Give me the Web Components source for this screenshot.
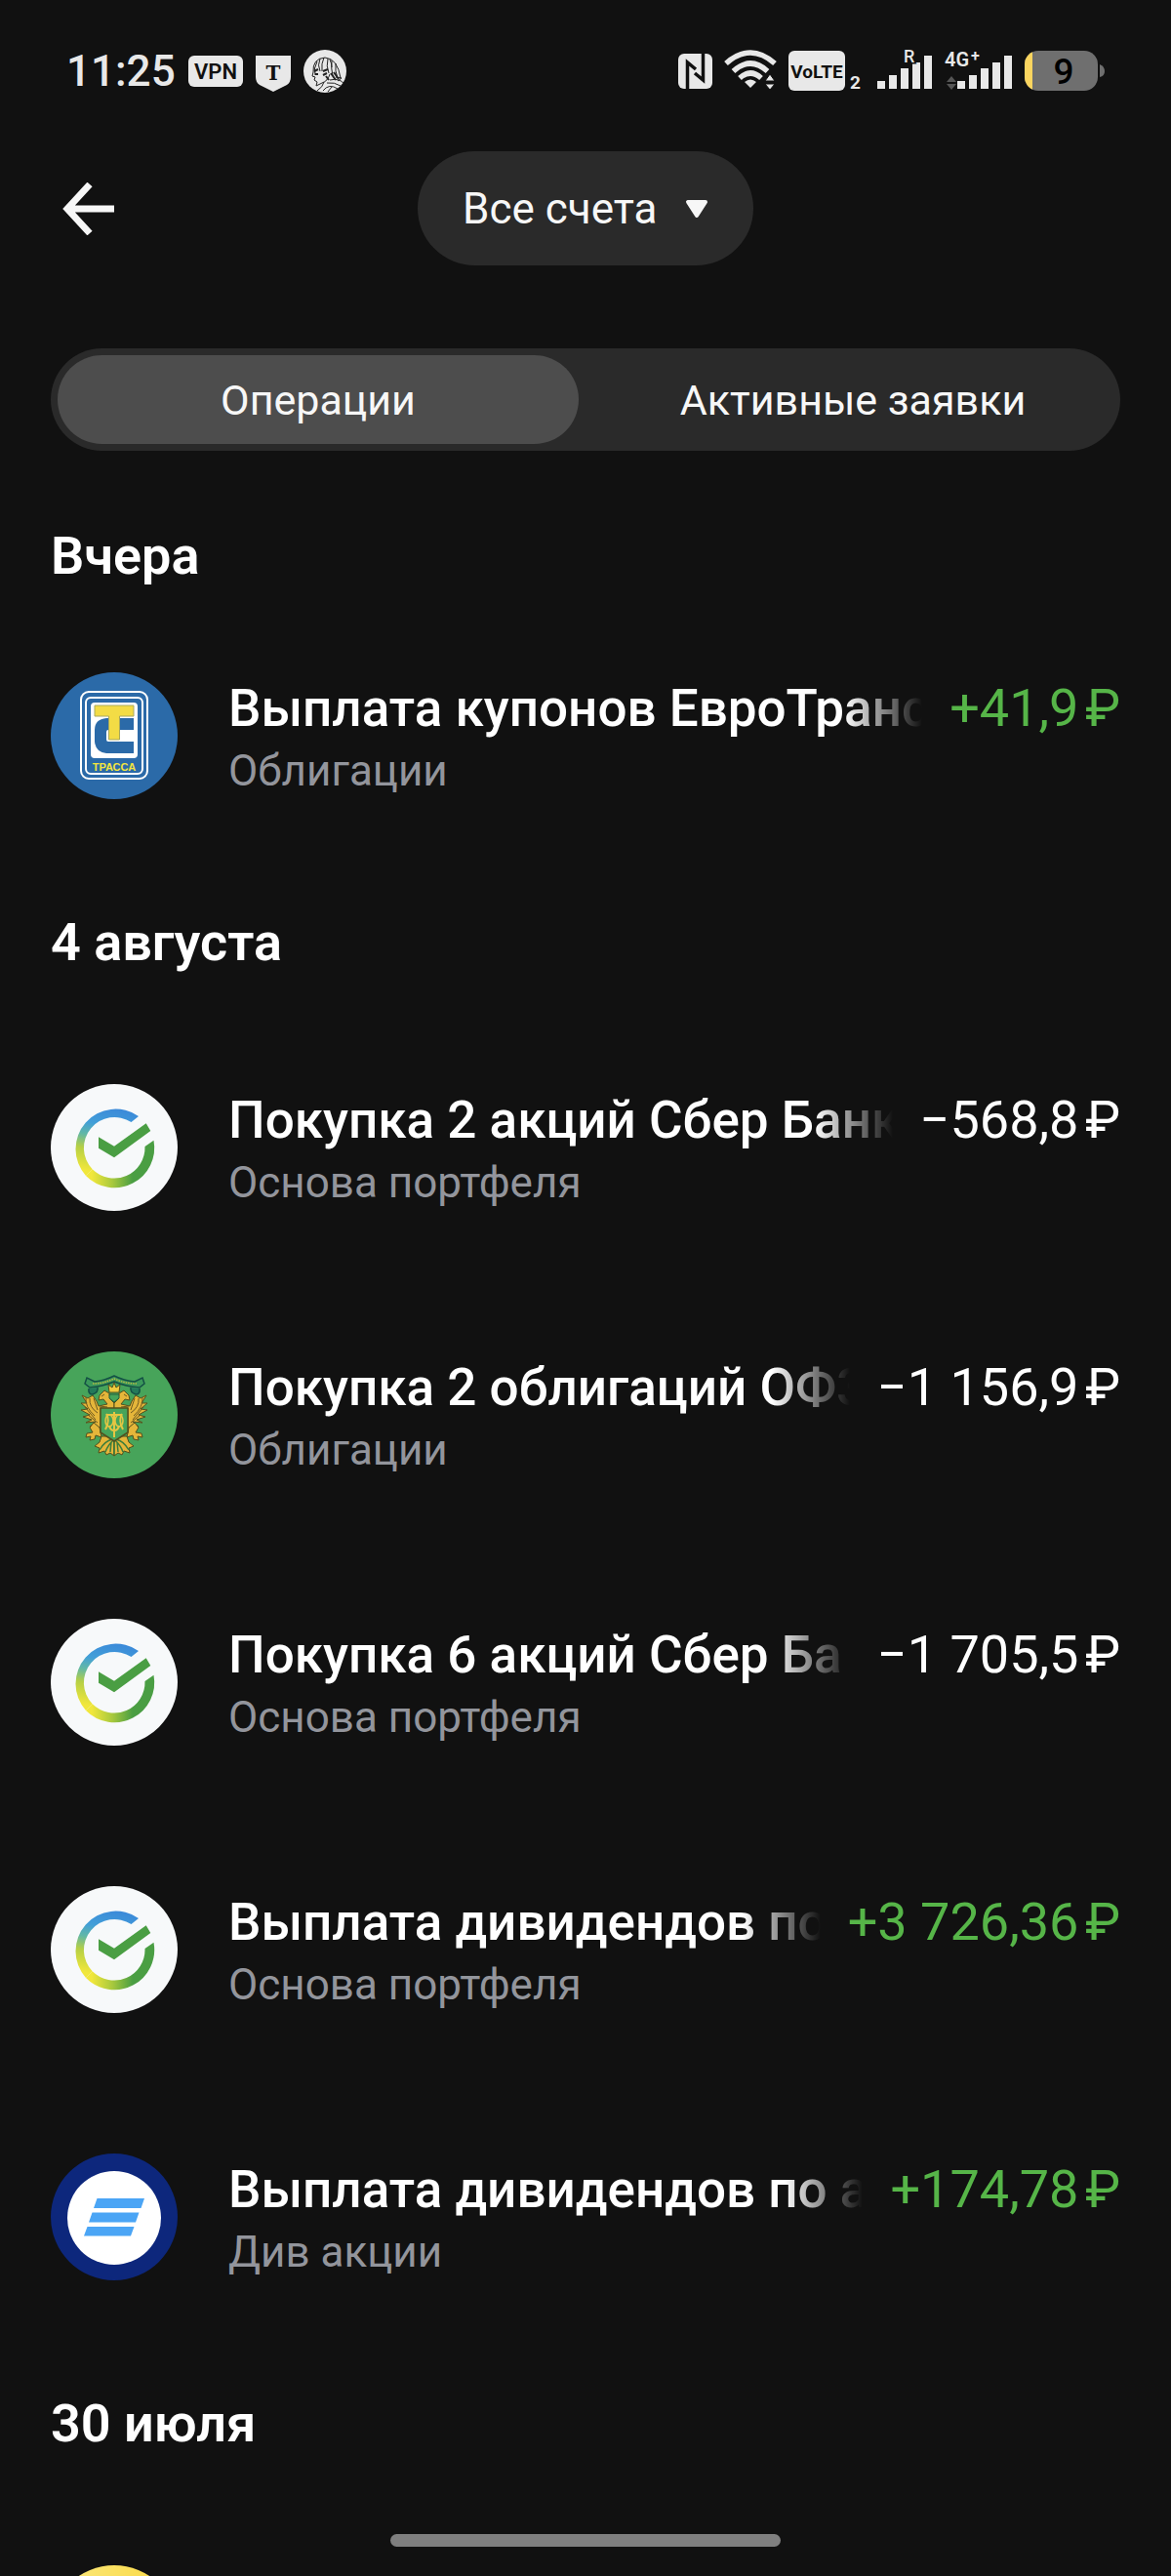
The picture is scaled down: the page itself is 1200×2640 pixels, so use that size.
<!DOCTYPE html>
<html lang="ru">
<head>
<meta charset="utf-8">
<meta name="viewport" content="width=device-width, initial-scale=1">
<title>Операции</title>
<style>
  :root {
    --bg: #111111;
    --surface: #2a2a2a;
    --surface-active: #4d4d4d;
    --text: #ffffff;
    --muted: #93959c;
    --income: #56b548;
    --gutter: 52px;
  }
  body { margin: 0; background: var(--bg); color: var(--text); font-family: Roboto, "Noto Sans", sans-serif; }
</style>
</head>
<body>
<operations-app></operations-app>

<script>
const define = (name, html, setup) => {
  const template = document.createElement('template');
  template.innerHTML = html;
  customElements.define(name, class extends HTMLElement {
    constructor() {
      super();
      this.attachShadow({ mode: 'open' }).append(template.content.cloneNode(true));
    }
    connectedCallback() { if (setup) setup(this, this.shadowRoot); }
  });
};

/* ---------- system status bar ---------- */
define('status-bar', `
  <style>
    :host { display: flex; align-items: center; justify-content: space-between; height: 146px; padding: 0 68px; color: #e8e8e8; }
    .group { display: flex; align-items: center; }
    .left { gap: 13px; }
    .right { gap: 12px; }
    time { font-size: 44px; line-height: 56px; font-weight: 500; }
    svg { display: block; fill: currentColor; overflow: visible; }
    text { font-family: Roboto, sans-serif; }
  </style>
  <div class="group left">
    <time>11:25</time>
    <svg width="56" height="44" viewBox="0 0 56 44" aria-label="VPN">
      <rect y="6" width="56" height="32" rx="6"/>
      <text x="28" y="30" text-anchor="middle" font-size="22" font-weight="600" fill="#111">VPN</text>
    </svg>
    <svg width="36" height="44" viewBox="0 0 36 44">
      <path d="M0 6H36V28Q36 33 32 36L18 43L4 36Q0 33 0 28Z"/>
      <text x="18" y="31" text-anchor="middle" font-size="20" font-weight="700" style="font-family:'DejaVu Serif',serif" fill="#111">T</text>
    </svg>
    <svg width="44" height="44" viewBox="0 0 44 44" aria-hidden="true">
      <circle cx="22" cy="22" r="22"/>
      <g fill="none" stroke="#222" stroke-width="1">
        <path d="M10 23Q9 9 22 8Q35 9 38 29M14 12Q10 19 12 26M17 9Q14 16 17 22M21 8Q18 14 19 22M25 9Q23 17 26 24M29 11Q28 19 30 27M33 14Q32 22 35 29M27 10Q29 14 29 18"/>
        <path d="M10 23L9 27L12 28L11 31L14 33L13 37L19 34Q25 32 27 25M21 33Q20 38 14 42M27 31Q36 29 41 34M24 34Q32 33 38 37M20 42Q26 34 35 40M25 43L29 38M33 28L39 29L35 32"/>
        <path d="M11 22L15 20M20 22L25 20M12 25H15M20 26L24 24M23 27L26 31M28 24L33 31M31 23L36 30" stroke-width="2"/>
      </g>
    </svg>
  </div>
  <div class="group right">
    <svg width="35" height="44" viewBox="0 0 35 44" aria-label="NFC">
      <rect y="4" width="35" height="36" rx="6"/>
      <path d="M9.500 40V13L18 20M25.500 4V31L17 24" fill="none" stroke="#111" stroke-width="3.500"/>
    </svg>
    <svg width="54" height="44" viewBox="0 0 54 44" aria-label="Wi-Fi">
      <g fill="none" stroke="currentColor" stroke-width="5.500">
        <path d="M2 14Q27 -8 52 14"/><path d="M9.500 22Q27 6 44.500 22"/><path d="M16 29Q27 19 38 29"/>
      </g>
      <path d="M21 33Q27 28 33 33L27 39Z"/>
      <path d="M47 25L52 32H42ZM42 35H52L47 41Z" stroke="#111" stroke-width="1"/>
    </svg>
    <svg width="74" height="44" viewBox="0 0 74 44" aria-label="VoLTE 2">
      <rect y="1" width="58" height="41" rx="6"/>
      <text x="29" y="29" text-anchor="middle" font-size="19" font-weight="700" fill="#111">VoLTE</text>
      <text x="63" y="40" font-size="19" font-weight="700">2</text>
    </svg>
    <svg width="62" height="44" viewBox="0 0 62 44">
      <path d="M5 32h8v8h-8zM17 26h8v14h-8zM29 19h8v21h-8zM41 13h8v27h-8zM53 6h8v34h-8z"/>
      <text x="32" y="13" font-size="18" font-weight="500" stroke="#111" stroke-width="3" paint-order="stroke">R</text>
    </svg>
    <svg width="70" height="44" viewBox="0 0 70 44">
      <path d="M13 32h8v8h-8zM25 26h8v14h-8zM37 19h8v21h-8zM49 13h8v27h-8zM61 6h8v34h-8z"/>
      <path d="M7 27L12 33H2ZM2 35H12L7 41Z" fill="#555"/>
      <text x="0" y="17" font-size="20" font-weight="600">4G</text>
      <text x="27" y="12" font-size="16" font-weight="600">+</text>
    </svg>
    <svg width="82" height="44" viewBox="0 0 82 44" aria-label="9%">
      <defs><clipPath id="b"><rect y="1" width="75" height="41" rx="14"/></clipPath></defs>
      <g clip-path="url(#b)"><rect width="75" height="44" fill="#6f6f6f"/><rect width="8" height="44" fill="#fbd55f"/></g>
      <path d="M77 15Q82 17 82 22T77 28Z" fill="#6f6f6f"/>
      <text x="40" y="35" text-anchor="middle" font-size="37" font-weight="500" fill="#000">9</text>
    </svg>
  </div>
`);

/* ---------- header with back arrow and account picker ---------- */
define('app-header', `
  <style>
    :host { display: grid; grid-template-columns: 1fr auto 1fr; align-items: center; padding: 9px var(--gutter) 0; }
    .back { justify-self: start; padding: 12px; border: 0; background: none; color: #f7f7f7; }
    svg { display: block; }
    .picker { display: grid; align-items: center; }
    .picker > * { grid-area: 1 / 1; }
    select {
      appearance: none; height: 117px; padding: 0 98px 0 46px; border: 0; border-radius: 59px;
      background: var(--surface); color: #f7f7f7; font: 400 44px/56px Roboto, "Noto Sans", sans-serif;
    }
    .caret { justify-self: end; margin-right: 46px; pointer-events: none; }
  </style>
  <button class="back" aria-label="Назад">
    <svg width="54" height="54" viewBox="0 0 54 54" fill="none" stroke="currentColor" stroke-width="7"><path d="M53 27H6M28 2L5 27L28 52"/></svg>
  </button>
  <div class="picker">
    <select aria-label="Счёт"><option>Все счета</option></select>
    <svg class="caret" width="24" height="20" viewBox="0 0 24 20" fill="#f7f7f7" stroke="#f7f7f7" stroke-width="4" stroke-linejoin="round"><path d="M3 3H21L12 17Z"/></svg>
  </div>
`);

/* ---------- segmented tabs ---------- */
define('segment-tabs', `
  <style>
    :host { display: block; margin: 85px var(--gutter) 0; }
    div { display: grid; grid-template-columns: 1fr 1fr; gap: 14px; padding: 7px; border-radius: 53px; background: var(--surface); }
    button { height: 91px; border: 0; border-radius: 46px; background: none; color: #f7f7f7; font: 400 43px/56px Roboto, "Noto Sans", sans-serif; }
    button[aria-selected="true"] { background: var(--surface-active); }
  </style>
  <div role="tablist">
    <button role="tab" aria-selected="true">Операции</button>
    <button role="tab" aria-selected="false">Активные заявки</button>
  </div>
`, (host, root) => {
  const tabs = root.querySelectorAll('button');
  tabs.forEach(tab => tab.onclick = () => tabs.forEach(t => t.setAttribute('aria-selected', t === tab)));
});

/* ---------- a day with its operations ---------- */
define('day-group', `
  <style>
    :host { display: block; }
    h2 { margin: 0; padding: 43px var(--gutter) 41px; font-size: 54px; line-height: 64px; font-weight: 600; }
    :host([first]) h2 { padding: 76px var(--gutter) 15px; }
  </style>
  <section><h2></h2><slot></slot></section>
`, (host, root) => { root.querySelector('h2').textContent = host.getAttribute('day'); });

/* ---------- one operation ---------- */
define('operation-row', `
  <style>
    :host { display: grid; grid-template-columns: 130px 1fr; column-gap: 52px; padding: 72px var(--gutter); }
    .body { min-width: 0; height: 130px; display: flex; flex-direction: column; justify-content: end; }
    .line { display: flex; gap: 28px; font-size: 53px; line-height: 70px; white-space: nowrap; }
    .title { flex: 1; min-width: 0; overflow: hidden; font-weight: 500;
      -webkit-mask-image: linear-gradient(to left, transparent, #000 80px); mask-image: linear-gradient(to left, transparent, #000 80px); }
    .amount { font-size: 54px; color: var(--text); }
    :host([income]) .amount { color: var(--income); }
    .note { font-size: 44px; line-height: 58px; color: var(--muted); }
  </style>
  <slot name="logo"></slot>
  <div class="body">
    <div class="line"><span class="title"><slot></slot></span><span class="amount"></span></div>
    <div class="note"></div>
  </div>
`, (host, root) => {
  root.querySelector('.amount').textContent = host.getAttribute('amount') || '';
  root.querySelector('.note').textContent = host.getAttribute('note') || '';
});

/* ---------- issuer logos ---------- */
const LOGOS = {
  trassa: `
    <circle cx="65" cy="65" r="65" fill="#2b6aa8"/>
    <g fill="none" stroke="#fff" stroke-width="2"><rect x="31" y="20" width="68" height="89" rx="8"/><rect x="36" y="26" width="58" height="78" rx="5"/></g>
    <rect x="41" y="31" width="48" height="57" rx="4" fill="#fff"/>
    <path d="M85 47H57Q45 48 45 59V71Q46 82 57 83H85V71H59Q57 71 57 69V61Q57 59 59 59H85Z" fill="#2b6aa8"/>
    <path d="M45 34H85V45H70.500V69H59.500V45H45Z" fill="#f3dc45" stroke="#a8a95e" stroke-width="1"/>
    <text x="65" y="101" text-anchor="middle" font-family="Liberation Sans" font-size="11" font-weight="700" fill="#f3e53e">ТРАССА</text>`,
  sber: `
    <defs>
      <linearGradient id="l" gradientUnits="userSpaceOnUse" x1="60" y1="24" x2="45" y2="98">
        <stop offset="0" stop-color="#3b8ad9"/><stop offset=".25" stop-color="#429fd8"/><stop offset=".42" stop-color="#62b8a5"/><stop offset=".6" stop-color="#b5cf45"/><stop offset=".9" stop-color="#f1e73b"/>
      </linearGradient>
      <linearGradient id="r" gradientUnits="userSpaceOnUse" x1="42" y1="0" x2="84" y2="0">
        <stop offset="0" stop-color="#f1e73b"/><stop offset=".5" stop-color="#a8c93d"/><stop offset="1" stop-color="#4a9e43"/>
      </linearGradient>
    </defs>
    <circle cx="65" cy="65" r="65" fill="#f7f9fa"/>
    <path d="M90 33A41 41 0 0 0 36 94L42.700 87.300A31.500 31.500 0 0 1 82.500 39Z" fill="url(#l)"/>
    <path d="M36 94A41 41 0 0 0 105.500 57.700L96.500 64A31.500 31.500 0 0 1 42.700 87.300Z" fill="url(#r)"/>
    <path d="M49 54.300L65 63.700L97.700 40.300L102.300 48L65 75.300L49 65.700Z" fill="#4a9e43"/>`,
  minfin: `
    <circle cx="65" cy="65" r="65" fill="#47a45a"/>
    <path d="M35 33L37 27L45 31Q55 30 65 25Q75 30 86 31L94 27L96 33L91 37Q77 36 65 31Q53 36 40 37Z" fill="#3b985a" stroke="#145045" stroke-width="1.500"/>
    <path d="M43 33Q54 33 65 28Q76 33 88 33" fill="none" stroke="#b5b845" stroke-width="1.500" stroke-dasharray="1.500 1"/>
    <path d="M39 38Q38 44 43 44Q49 42 48 37M91 38Q92 44 87 44Q81 42 82 37" fill="#23795a" stroke="#145045" stroke-width="1.500"/>
    <g id="half">
      <path d="M65 59L51 58V80L47 76L40 77L46 72L36 73L42 70L33 67L40 65L31 60L38 59L31 53L37 53L32 45L38 48L43 45L47 51L49 56L58 54L54 49L49 50L50 45L55 40L60 43L61 49L65 53Z" fill="#e5b63a" stroke="#54501d" stroke-width="1"/>
      <path d="M36 47Q35 57 45 66M40 48Q39 57 48 63M35 57L46 70M38 65L48 73M44 48L48 60M52 46L55 44M50 56L58 57" fill="none" stroke="#6e5920" stroke-width="1"/>
      <path d="M50 78L44 73L40 78L43 83L37 84L36 88L41 87L40 91L45 90L46 86L52 88Z" fill="#e5b63a" stroke="#54501d" stroke-width="1"/>
      <path d="M65 107L61 104L57 106L55 102L49 104L50 99L45 97L50 93L52 87L65 87Z" fill="#e5b63a" stroke="#54501d" stroke-width="1"/>
      <path d="M63 90Q55 92 50 101M64 91Q58 97 56 103M65 90V106M62 93L61 103" fill="none" stroke="#3d7d3b" stroke-width="1.500"/>
    </g>
    <use href="#half" transform="matrix(-1 0 0 1 130 0)"/>
    <path d="M60 42L59 34L63 37L65 32L67 37L71 34L70 42Z" fill="#efcb3f" stroke="#54501d" stroke-width="1"/>
    <path d="M60 44H70V48L65 52L60 48Z" fill="#47a45a" stroke="#265c3a" stroke-width="1"/>
    <path d="M51 58H79V83L65 92L51 83Z" fill="#47a45a" stroke="#54501d" stroke-width="1.500"/>
    <path d="M57 64Q61 71 56 80M73 64Q69 71 74 80M65 62V88M58 65H72M60 76Q61 81 65 81Q69 81 70 76" fill="none" stroke="#e5c643" stroke-width="2"/>
    <ellipse cx="60" cy="71" rx="4" ry="6" fill="none" stroke="#e5c643" stroke-width="1.500"/>
    <ellipse cx="70" cy="71" rx="4" ry="6" fill="none" stroke="#e5c643" stroke-width="1.500"/>`,
  bank: `
    <circle cx="65" cy="65" r="65" fill="#0d277c"/>
    <circle cx="65" cy="66" r="48" fill="#fff"/>
    <path d="M47.500 46H96L92.500 56H44ZM42.500 60.500H90.500L87 70.500H39ZM37.500 75H85.500L82 84.500H34Z" fill="#4ba5f5"/>`,
  yellow: `
    <defs><linearGradient id="y"><stop stop-color="#fbe982"/><stop offset="1" stop-color="#fbd941"/></linearGradient></defs>
    <circle cx="65" cy="65" r="65" fill="url(#y)"/>`
};
define('issuer-logo', `
  <style>:host { display: block; width: 130px; height: 130px; } svg { display: block; }</style>
  <svg width="130" height="130" viewBox="0 0 130 130" aria-hidden="true"></svg>
`, (host, root) => { root.querySelector('svg').innerHTML = LOGOS[host.getAttribute('name')]; });

/* ---------- the screen ---------- */
define('operations-app', `
  <style>
    :host { display: flex; flex-direction: column; height: 100vh; overflow: hidden; position: relative; background: var(--bg); }
    status-bar, app-header, segment-tabs { flex: none; }
    main { flex: 1; min-height: 0; overflow: hidden; }
    .home { position: absolute; left: 0; right: 0; bottom: 30px; width: 33.333%; height: 13px; margin: 0 auto; border-radius: 7px; background: #7f7f7f; }
  </style>
  <status-bar></status-bar>
  <app-header></app-header>
  <segment-tabs></segment-tabs>
  <main>
    <day-group day="Вчера" first>
      <operation-row income amount="+41,9&#8239;₽" note="Облигации"><issuer-logo slot="logo" name="trassa"></issuer-logo>Выплата купонов ЕвроТранс</operation-row>
    </day-group>
    <day-group day="4 августа">
      <operation-row amount="−568,8&#8239;₽" note="Основа портфеля"><issuer-logo slot="logo" name="sber"></issuer-logo>Покупка 2 акций Сбер Банк</operation-row>
      <operation-row amount="−1&nbsp;156,9&#8239;₽" note="Облигации"><issuer-logo slot="logo" name="minfin"></issuer-logo>Покупка 2 облигаций ОФЗ</operation-row>
      <operation-row amount="−1&nbsp;705,5&#8239;₽" note="Основа портфеля"><issuer-logo slot="logo" name="sber"></issuer-logo>Покупка 6 акций Сбер Ба</operation-row>
      <operation-row income amount="+3&nbsp;726,36&#8239;₽" note="Основа портфеля"><issuer-logo slot="logo" name="sber"></issuer-logo>Выплата дивидендов по</operation-row>
      <operation-row income amount="+174,78&#8239;₽" note="Див акции"><issuer-logo slot="logo" name="bank"></issuer-logo>Выплата дивидендов по а</operation-row>
    </day-group>
    <day-group day="30 июля">
      <operation-row><issuer-logo slot="logo" name="yellow"></issuer-logo></operation-row>
    </day-group>
  </main>
  <div class="home"></div>
`);
</script>
</body>
</html>
